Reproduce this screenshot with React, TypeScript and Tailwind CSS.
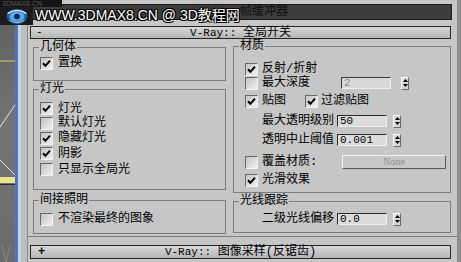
import type { ReactNode } from "react";

function Box({ on }: { on?: boolean }) {
  return (
    <span className="flex h-[13px] w-[13px] shrink-0 items-center justify-center border border-t-[#686868] border-l-[#686868] border-r-[#f2f2f2] border-b-[#f2f2f2] bg-gradient-to-br from-[#c4c4c4] to-[#f0f0f0]">
      {on && (
        <svg width="9" height="9" viewBox="0 0 9 9">
          <path d="M1 4.2 L3.4 6.8 L8 1.6" fill="none" stroke="#000" strokeWidth="2" />
        </svg>
      )}
    </span>
  );
}

function Spin() {
  return (
    <span className="ml-[6px] flex h-[13px] w-[8px] flex-col items-center justify-center gap-[2px] border border-t-white border-l-white border-r-[#6a6a6a] border-b-[#6a6a6a] bg-[#d6d6d6]">
      <svg width="5" height="3" viewBox="0 0 5 3">
        <path d="M2.5 0 L5 3 L0 3Z" fill="#000" />
      </svg>
      <svg width="5" height="3" viewBox="0 0 5 3">
        <path d="M0 0 L5 0 L2.5 3Z" fill="#000" />
      </svg>
    </span>
  );
}

function Field({ v, dim }: { v: string; dim?: boolean }) {
  return (
    <span
      className={
        dim
          ? "flex h-[12px] w-[50px] items-center border border-t-[#3a3a3a] border-l-[#3a3a3a] border-r-[#eeeeee] border-b-[#eeeeee] bg-[#d8d8d8] pl-[2px] text-[11px] leading-none text-[#8a8a8a]"
          : "flex h-[12px] w-[50px] items-center border border-t-[#2a2a2a] border-l-[#2a2a2a] border-r-[#eeeeee] border-b-[#eeeeee] bg-[#dcdcdc] pl-[2px] text-[11px] leading-none"
      }
    >
      {v}
    </span>
  );
}

// etched group box, legend sits on the top line
function Group({ title, className, children }: { title: string; className: string; children: ReactNode }) {
  return (
    <fieldset className={className}>
      <legend className="ml-[5px] px-[1px] text-[12px] leading-[12px]">{title}</legend>
      {children}
    </fieldset>
  );
}

function Row({ on, label, className }: { on?: boolean; label: string; className: string }) {
  return (
    <div className={className}>
      <Box on={on} />
      <span className="leading-none">{label}</span>
    </div>
  );
}

export default function App() {
  return (
    <div className="relative flex h-[262px] w-[461px] overflow-hidden bg-[#c6c6c6] font-['Liberation_Mono','Noto_Sans_CJK_SC',monospace] text-[12px] text-black">
      {/* viewport edge */}
      <div className="flex w-[28px] shrink-0">
        <div className="w-[15px] bg-gradient-to-b from-[#5e5e5e] via-[#747474] to-[#6a6a6a]">
          <svg width="15" height="262" viewBox="0 0 15 262">
            <line x1="0" y1="61" x2="15" y2="61" stroke="#d6d64a" strokeWidth="1" />
            <line x1="0" y1="127" x2="15" y2="105" stroke="#e8e8e8" strokeWidth="1" />
            <line x1="0" y1="160" x2="15" y2="175" stroke="#e0e0e0" strokeWidth="1" />
            <rect x="0" y="177" width="15" height="6" fill="#e6e68a" />
            <line x1="0" y1="184.5" x2="15" y2="184.5" stroke="#2a2a2a" strokeWidth="1" />
            <line x1="2" y1="245" x2="6" y2="262" stroke="#8a8a8a" strokeWidth="1" />
            <line x1="10" y1="245" x2="6" y2="262" stroke="#8a8a8a" strokeWidth="1" />
          </svg>
        </div>
        <div className="w-[3px] bg-[#5574b8]" />
        <div className="w-[3px] bg-[#c9d2e6]" />
        <div className="flex-1 border-r border-[#8a8a8a] bg-[#bdbdbd]" />
      </div>

      {/* rollout panel */}
      <div className="flex w-[429px] shrink-0 flex-col">
        <div className="ml-[2px] mt-[4px] h-[16px] w-[422px] border border-[#1a1a1a] bg-[#3c3c3c] pl-[209px] text-[12px] leading-[14px] text-[#0e0e0e]">
          帧缓冲器
        </div>

        <div className="ml-[2px] mt-[6px] flex h-[13px] w-[421px] items-center justify-between border border-[#262626] bg-gradient-to-b from-[#d8d8d8] to-[#b6b6b6] px-[5px] leading-none">
          <span className="w-[40px] text-[11px]">-</span>
          <span>
            <span className="text-[11px]">V-Ray:: </span>全局开关
          </span>
          <span className="w-[40px]" />
        </div>

        <div className="flex h-[198px] gap-[7px] border-b border-[#808080] pl-[5px]">
          {/* left column */}
          <div className="flex w-[193px] flex-col pt-[2px]">
            <Group title="几何体" className="h-[40px] border border-[#7c7c7c]">
              <Row on label="置换" className="ml-[6px] mt-[3px] flex h-[14px] items-center gap-[5px]" />
            </Group>
            <Group title="灯光" className="mt-[2px] h-[107px] border border-[#7c7c7c]">
              <div className="ml-[6px] mt-[6px] flex flex-col">
                <Row on label="灯光" className="flex h-[15px] items-center gap-[5px]" />
                <Row label="默认灯光" className="flex h-[14px] items-center gap-[5px]" />
                <Row on label="隐藏灯光" className="flex h-[16px] items-center gap-[5px]" />
                <Row on label="阴影" className="flex h-[15px] items-center gap-[5px]" />
                <Row label="只显示全局光" className="flex h-[17px] items-center gap-[5px]" />
              </div>
            </Group>
            <Group title="间接照明" className="mt-[4px] h-[40px] border border-[#7c7c7c]">
              <Row label="不渲染最终的图象" className="ml-[6px] mt-[6px] flex h-[14px] items-center gap-[5px]" />
            </Group>
          </div>

          {/* right column */}
          <div className="flex w-[218px] flex-col pt-[1px]">
            <Group title="材质" className="h-[153px] border border-[#7c7c7c]">
              <div className="flex flex-col pl-[11px]">
                <Row on label="反射/折射" className="mt-[10px] flex h-[14px] items-center gap-[4px]" />
                <div className="flex h-[14px] items-center gap-[4px]">
                  <Box />
                  <span className="w-[75px] leading-none">最大深度</span>
                  <Field v="2" dim />
                  <Spin />
                </div>
                <div className="mt-[4px] flex h-[14px] items-center">
                  <Box on />
                  <span className="ml-[4px] w-[43px] leading-none">贴图</span>
                  <Box on />
                  <span className="ml-[3px] leading-none">过滤贴图</span>
                </div>
                <div className="mt-[6px] flex h-[14px] items-center pl-[17px]">
                  <span className="w-[75px] leading-none">最大透明级别</span>
                  <Field v="50" />
                  <Spin />
                </div>
                <div className="mt-[5px] flex h-[14px] items-center pl-[17px]">
                  <span className="w-[75px] leading-none">透明中止阈值</span>
                  <Field v="0.001" />
                  <Spin />
                </div>
                <div className="mt-[8px] flex h-[14px] items-center gap-[4px]">
                  <Box />
                  <span className="w-[76px] leading-none">覆盖材质:</span>
                  <span className="flex h-[14px] w-[104px] items-center justify-center border border-t-[#f0f0f0] border-l-[#f0f0f0] border-r-[#5a5a5a] border-b-[#5a5a5a] bg-[#c8c8c8] font-['Liberation_Serif',serif] text-[10px] leading-none text-[#8c8c8c]">
                    None
                  </span>
                </div>
                <Row on label="光滑效果" className="mt-[4px] flex h-[14px] items-center gap-[4px]" />
              </div>
            </Group>
            <Group title="光线跟踪" className="mt-[2px] h-[38px] border border-[#7c7c7c]">
              <div className="ml-[28px] mt-[5px] flex h-[14px] items-center">
                <span className="w-[75px] leading-none">二级光线偏移</span>
                <Field v="0.0" />
                <Spin />
              </div>
            </Group>
          </div>
        </div>

        <div className="ml-[2px] mt-[8px] flex h-[14px] w-[421px] items-center justify-between border border-[#262626] bg-gradient-to-b from-[#d8d8d8] to-[#b6b6b6] px-[7px] leading-none">
          <span className="w-[40px] text-[12px] font-bold">+</span>
          <span>
            <span className="text-[11px]">V-Ray:: </span>图像采样(反锯齿)
          </span>
          <span className="w-[40px]" />
        </div>
      </div>

      <div className="w-[4px] shrink-0 bg-[#8e8e8e]" />

      {/* watermark */}
      <div className="absolute left-0 top-0 h-[7px] w-[62px] bg-[#141414] pl-[2px] font-['Liberation_Sans',sans-serif] text-[7px] leading-[7px] text-[#5a5a5a]">
        3DMAX8.CN
      </div>
      <div className="absolute left-0 top-[7px] flex h-[18px] w-[33px] items-center justify-center bg-[#1c1c1c]">
        <svg width="24" height="17" viewBox="0 0 24 18">
          <ellipse cx="12" cy="9" rx="11" ry="8" fill="#1f5d9c" />
          <ellipse cx="12" cy="9" rx="8" ry="5.5" fill="#5aa6e8" />
          <circle cx="12" cy="9" r="3" fill="#0d2a4a" />
          <path d="M2 6 Q12 -1 22 6" fill="none" stroke="#d8ecff" strokeWidth="1.5" />
          <path d="M4 13 Q12 18 20 13" fill="none" stroke="#9ccaf2" strokeWidth="1" />
        </svg>
      </div>
      <div className="absolute left-[35px] top-[7px] font-['Liberation_Sans','Noto_Sans_CJK_SC',sans-serif] text-[14px] leading-[16px] text-white [text-shadow:1px_1px_0_#000,-1px_-1px_0_#000,1px_-1px_0_#000,-1px_1px_0_#000]">
        WWW.3DMAX8.CN @ 3D教程网
      </div>
    </div>
  );
}
